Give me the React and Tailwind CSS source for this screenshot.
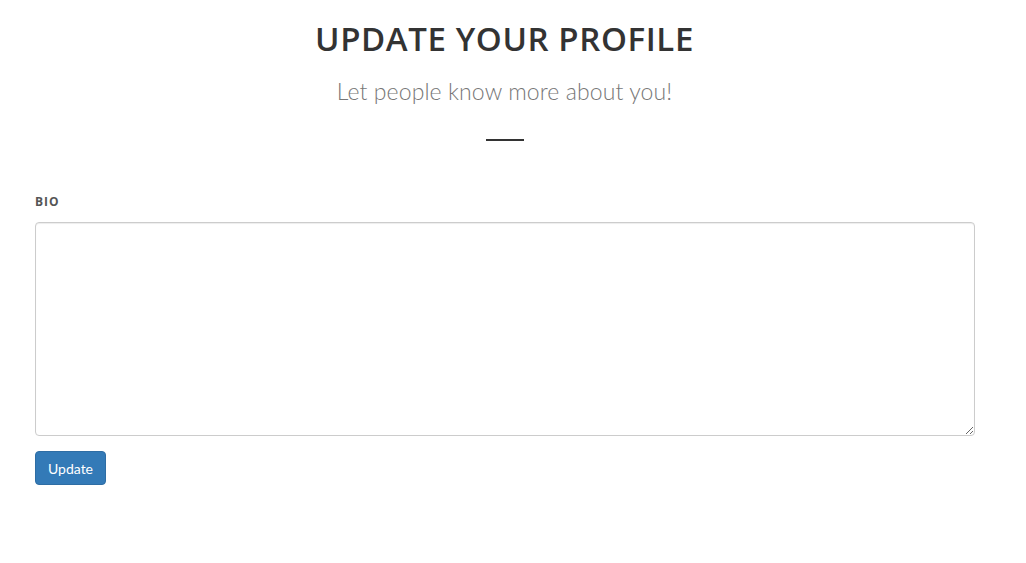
export default function App() {
  return (
    <div className="w-[1009px] min-h-[563px] bg-white font-['Lato',sans-serif]">
      <div className="flex flex-col items-center pt-[19px]">
        <h1 className="text-[33px] leading-[40px] font-semibold text-[#333] tracking-[0.6px] font-['Open_Sans',sans-serif]">
          UPDATE YOUR PROFILE
        </h1>
        <p className="mt-[17px] text-[23px] leading-[30px] font-light text-[#777] tracking-[0.1px]">
          Let people know more about you!
        </p>
        <div className="mt-[33px] w-[38px] h-[2px] bg-[#333]"></div>
      </div>
      <div className="ml-[35px] w-[940px] mt-[54px] flex flex-col items-start">
        <label className="block text-[12px] leading-[14px] font-bold text-[#555] tracking-[1px] font-['Open_Sans',sans-serif]">
          BIO
        </label>
        <textarea className="block mt-[13px] w-[940px] h-[214px] border border-[#ccc] rounded-[4px] shadow-[inset_0_1px_1px_rgba(0,0,0,0.075)] outline-none"></textarea>
        <button className="mt-[15px] h-[34px] px-[12px] bg-[#337ab7] border border-[#2e6da4] rounded-[4px] text-white text-[14px]">
          Update
        </button>
      </div>
    </div>
  );
}
